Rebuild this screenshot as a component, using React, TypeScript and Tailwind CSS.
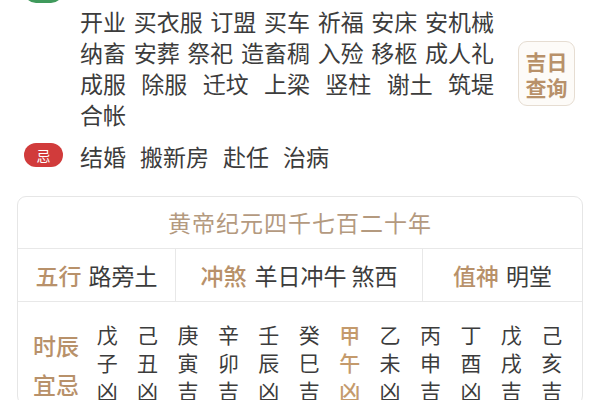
const yiRows: string[][] = [
  ['嫁娶', '纳采', '订盟', '祭祀', '祈福', '求嗣', '出行'],
  ['开业', '买衣服', '订盟', '买车', '祈福', '安床', '安机械'],
  ['纳畜', '安葬', '祭祀', '造畜稠', '入殓', '移柩', '成人礼'],
  ['成服', '除服', '迁坟', '上梁', '竖柱', '谢土', '筑堤'],
  ['合帐'],
];

const jiWords = ['结婚', '搬新房', '赴任', '治病'];

const hours = [
  ['戊', '子', '凶'],
  ['己', '丑', '凶'],
  ['庚', '寅', '吉'],
  ['辛', '卯', '吉'],
  ['壬', '辰', '凶'],
  ['癸', '巳', '吉'],
  ['甲', '午', '凶'],
  ['乙', '未', '凶'],
  ['丙', '申', '吉'],
  ['丁', '酉', '凶'],
  ['戊', '戌', '吉'],
  ['己', '亥', '吉'],
];

const CURRENT_HOUR = 6;

export default function App() {
  return (
    <div
      className="w-[600px] h-[400px] overflow-hidden bg-white text-[#3c3c3c]"
      style={{ fontFamily: '"Noto Sans CJK SC", "Noto Sans", sans-serif' }}
    >
      {/* 宜 */}
      <div className="flex mt-[-25px]">
        <div className="ml-[24px] w-[39px] shrink-0">
          <div className="mt-[3.5px] h-[24px] rounded-full bg-[#3f9a5c] text-white text-[14px] leading-[24px] text-center">
            宜
          </div>
        </div>
        <div className="ml-[17px] w-[414px] text-[23px] leading-[31px]">
          {yiRows.map((row, i) => (
            <div
              key={i}
              className={`flex ${row.length > 1 ? 'justify-between' : ''} ${i === 0 ? 'h-[31px] leading-[24px]' : ''}`}
            >
              {row.map((w, j) => (
                <span key={j}>{w}</span>
              ))}
            </div>
          ))}
        </div>
        <div className="ml-[24px] mt-[66px] self-start w-[57px] h-[65px] rounded-[9px] border border-[#e6ddd2] bg-[#fdfbf8] flex flex-col items-center justify-center text-[#b8916a] text-[21px] leading-[26px] font-bold">
          <span>吉日</span>
          <span>查询</span>
        </div>
      </div>

      {/* 忌 */}
      <div className="flex mt-[10.5px]">
        <div className="ml-[24px] w-[39px] shrink-0">
          <div className="mt-[2.5px] h-[24px] rounded-full bg-[#d13b3b] text-white text-[14px] leading-[24px] text-center">
            忌
          </div>
        </div>
        <div className="ml-[17px] flex gap-[14px] text-[23px] leading-[31px]">
          {jiWords.map((w) => (
            <span key={w}>{w}</span>
          ))}
        </div>
      </div>

      {/* card */}
      <div className="mx-[17px] mt-[24.5px] rounded-[9px] border border-[#e6e6e6]">
        <div className="h-[51px] flex items-center justify-center text-[23px] tracking-[1px] text-[#b49a7f]">
          黄帝纪元四千七百二十年
        </div>
        <div className="flex h-[54px] border-t border-b border-[#e8e8e8] text-[23px]">
          <div className="w-[157px] flex items-center justify-center gap-[7px]">
            <span className="text-[#b8916a] font-medium">五行</span>
            <span>路旁土</span>
          </div>
          <div className="w-[248px] border-l border-r border-[#e8e8e8] flex items-center justify-center gap-[8px]">
            <span className="text-[#b8916a] font-medium">冲煞</span>
            <span>羊日冲牛 煞西</span>
          </div>
          <div className="flex-1 flex items-center justify-center gap-[7px]">
            <span className="text-[#b8916a] font-medium">值神</span>
            <span>明堂</span>
          </div>
        </div>
        <div className="flex pt-[18px] pl-[15px] pr-[10px]">
          <div className="w-[54px] pt-[6px] text-[23px] leading-[39px] font-medium text-[#b8916a]">
            <div>时辰</div>
            <div>宜忌</div>
          </div>
          <div className="flex-1 grid grid-cols-12 text-[21px] leading-[28px]">
            {hours.map((h, i) => (
              <div
                key={i}
                className={`flex flex-col items-center ${i === CURRENT_HOUR ? 'text-[#c49a6c] font-medium' : ''}`}
              >
                {h.map((c, j) => (
                  <span key={j}>{c}</span>
                ))}
              </div>
            ))}
          </div>
        </div>
      </div>
    </div>
  );
}
